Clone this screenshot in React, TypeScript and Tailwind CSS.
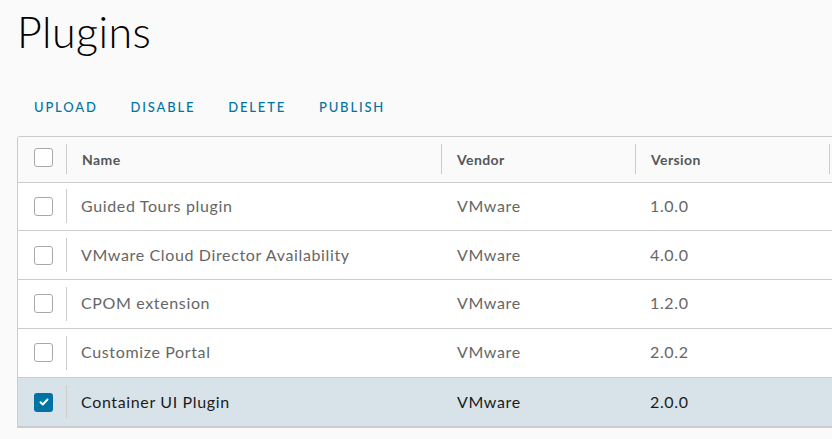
const plugins = [
  { name: 'Guided Tours plugin', vendor: 'VMware', version: '1.0.0', selected: false },
  { name: 'VMware Cloud Director Availability', vendor: 'VMware', version: '4.0.0', selected: false },
  { name: 'CPOM extension', vendor: 'VMware', version: '1.2.0', selected: false },
  { name: 'Customize Portal', vendor: 'VMware', version: '2.0.2', selected: false },
  { name: 'Container UI Plugin', vendor: 'VMware', version: '2.0.0', selected: true },
];

function Checkbox({ checked }: { checked: boolean }) {
  if (checked) {
    return (
      <div className="w-[19px] h-[19px] rounded-[3px] bg-[#0072a3] flex items-center justify-center">
        <svg className="w-3 h-3" viewBox="0 0 12 12" fill="none">
          <path d="M2.5 6.2l2.3 2.3 4.7-5" stroke="white" strokeWidth={2} strokeLinecap="round" strokeLinejoin="round" />
        </svg>
      </div>
    );
  }
  return <div className="w-[19px] h-[19px] rounded-[3px] border border-[#a9a9a9] bg-white" />;
}

export default function App() {
  return (
    <div className="w-[832px] h-[439px] overflow-hidden bg-[#fafafa] font-['Lato',sans-serif]">
      {/* titulo */}
      <h1 className="pl-[17px] pt-[5px] text-[43px] leading-[54px] font-light tracking-[0.01em] text-[#000]">Plugins</h1>

      {/* acciones */}
      <div className="flex items-center pl-[34px] mt-[39px] gap-[33px] text-[13px] font-medium tracking-[0.14em] text-[#0072a3]">
        <span>UPLOAD</span>
        <span>DISABLE</span>
        <span>DELETE</span>
        <span>PUBLISH</span>
      </div>

      {/* tabla */}
      <div className="ml-[17px] mt-[18px] w-[900px] border border-[#ccc] border-b-2 rounded-tl-[3px] bg-white">
        <div className="grid grid-cols-[48px_375px_194px_194px_1fr] h-[46px] bg-[#fafafa] border-b border-[#ccc] text-[14px] font-bold tracking-[0.03em] text-[#565656]">
          <div className="flex items-center pl-[16px]">
            <div className="mt-[-4px]"><Checkbox checked={false} /></div>
          </div>
          {['Name', 'Vendor', 'Version', ''].map((h) => (
            <div key={h} className="flex items-center">
              <div className="w-px h-[30px] bg-[#ccc]" />
              <span className="pl-[15px]">{h}</span>
            </div>
          ))}
        </div>

        {plugins.map((p, i) => (
          <div
            key={p.name}
            className={`grid grid-cols-[48px_375px_194px_194px_1fr] h-[48.8px] text-[16px] tracking-[0.04em] ${
              i < plugins.length - 1 ? 'border-b border-[#ccc]' : ''
            } ${p.selected ? 'bg-[#d8e3e9] text-[#1b1b1b]' : 'text-[#666]'}`}
          >
            <div className="flex items-center pl-[16px]">
              <Checkbox checked={p.selected} />
            </div>
            <div className="flex items-center">
              <div className="w-px h-[34px] bg-[#ccc]" />
              <span className="pl-[14px] pb-px">{p.name}</span>
            </div>
            <div className="flex items-center pl-[16px] pb-px">{p.vendor}</div>
            <div className="flex items-center pl-[15px] pb-px">{p.version}</div>
            <div />
          </div>
        ))}
      </div>
    </div>
  );
}
